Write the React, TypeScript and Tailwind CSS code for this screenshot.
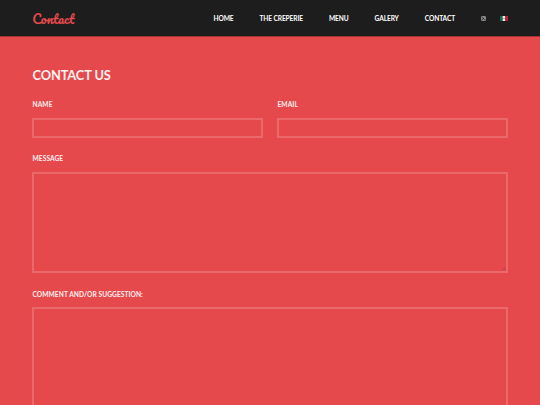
const navItems: string[] = ["HOME", "THE CREPERIE", "MENU", "GALERY", "CONTACT"];

const labelClass = "block pl-[0.5px] text-[6.6px] leading-[10px] tracking-[0.08px] font-bold text-[#fff0f0]";
const fieldClass = "block w-full border-2 border-[#eb686b] bg-transparent outline-none px-2 text-[8px] text-white";

const InstagramIcon = () => {
  return (
    <svg className="w-[5px] h-[5px]" viewBox="0 0 24 24" fill="none" stroke="#c4c4c4" strokeWidth="3.5">
      <rect x="2" y="2" width="20" height="20" rx="4" />
      <circle cx="12" cy="12" r="5" />
      <circle cx="18" cy="6" r="1" />
    </svg>
  );
};

const FlagIcon = () => {
  return (
    <svg className="w-[8px] h-[5px]" viewBox="0 0 24 15">
      <rect width="8" height="15" fill="#116b4d" />
      <rect x="8" width="8" height="15" fill="#f3f3f3" />
      <rect x="16" width="8" height="15" fill="#c01f36" />
      <circle cx="12" cy="7.5" r="2.5" fill="#a59a83" />
    </svg>
  );
};

// small diagonal grip in the corner of a textarea
const ResizeGrip = () => {
  return (
    <svg className="absolute right-[2px] bottom-[3px] w-[4px] h-[4px]" viewBox="0 0 8 8" stroke="#8f3a3c" strokeWidth="1">
      <path d="M1 8L8 1M5 8L8 5" />
    </svg>
  );
};

const Header = () => {
  return (
    <header className="h-[37px] bg-[#1d1d1d] border-b border-[#a53638] pl-8 pr-8 flex items-center justify-between">
      <a href="#" className="text-[#e6494c]">
        <svg className="w-[44px] h-[20px] overflow-visible" viewBox="0 0 44 20">
          <text
            x="0.2"
            y="15.6"
            textLength="42"
            lengthAdjust="spacingAndGlyphs"
            fill="currentColor"
            className="font-['Pacifico',cursive] text-[13px]"
          >
            Contact
          </text>
        </svg>
      </a>
      <nav className="flex items-center gap-[26px] text-[6.6px] leading-[10px] tracking-[-0.1px] font-bold text-white">
        {navItems.map((item) => (
          <a key={item} href="#">{item}</a>
        ))}
        <div className="flex items-center gap-[14px]">
          <a href="#"><InstagramIcon /></a>
          <a href="#"><FlagIcon /></a>
        </div>
      </nav>
    </header>
  );
};

const App = () => {
  return (
    <div className="h-[405px] overflow-hidden bg-[#e6494c] font-['Lato',sans-serif]">
      <Header />
      <main className="px-8 pt-7">
        <h1 className="pl-[0.5px] text-[12.8px] leading-[20px] tracking-[-0.1px] font-bold text-[#fff1f1]">CONTACT US</h1>
        <form className="pt-[14px]">
          <div className="grid grid-cols-2 gap-[14px]">
            <div>
              <label className={labelClass} htmlFor="name">NAME</label>
              <input id="name" className={`${fieldClass} mt-[9px] h-[20px]`} />
            </div>
            <div>
              <label className={labelClass} htmlFor="email">EMAIL</label>
              <input id="email" type="email" className={`${fieldClass} mt-[9px] h-[20px]`} />
            </div>
          </div>
          <div className="mt-[15px]">
            <label className={labelClass} htmlFor="message">MESSAGE</label>
            <div className="relative mt-[9px]">
              <textarea id="message" className={`${fieldClass} h-[101px] resize-none`} />
              <ResizeGrip />
            </div>
          </div>
          <div className="mt-4">
            <label className={labelClass} htmlFor="comment">COMMENT AND/OR SUGGESTION:</label>
            <textarea id="comment" className={`${fieldClass} mt-[8px] h-[102px] resize-none`} />
          </div>
        </form>
      </main>
    </div>
  );
};

export default App;
